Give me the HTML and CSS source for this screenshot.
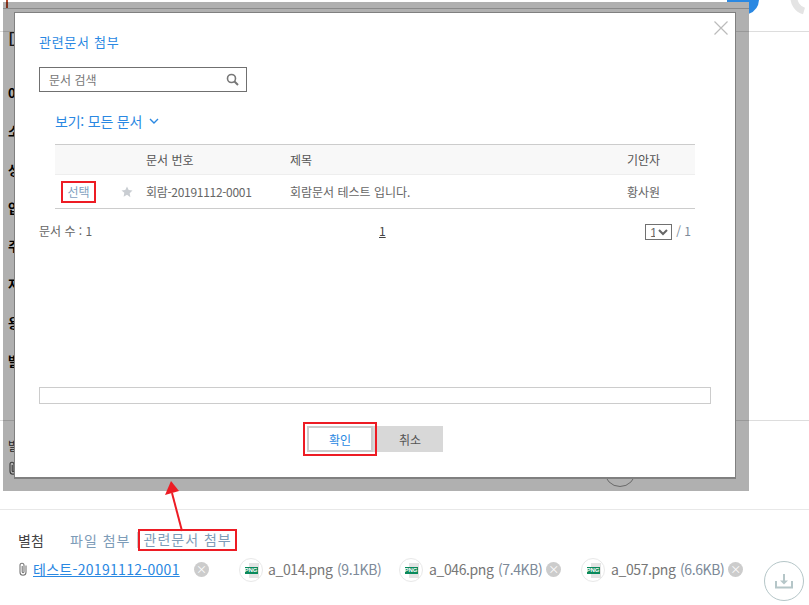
FILE: index.html
```html
<!DOCTYPE html>
<html lang="ko">
<head>
    <meta charset="UTF-8">
    <title>관련문서 첨부</title>
    <link rel="stylesheet" href="styles.css">
</head>
<body>
    <div class="page">
        <div class="main">
            <div class="top-bar">
                <span class="top-mark"></span>
                <svg class="top-icons" width="82" height="32" viewBox="0 0 82 32">
                    <path d="M0 0H22V2H0z" fill="#2a88e2"/>
                    <path d="M22 0H32A16 16 0 0 1 22 13.8z" fill="#2a88e2"/>
                    <path d="M67 -4A14 14 0 0 0 77 11" fill="none" stroke="#e4e4e4" stroke-width="7"/>
                </svg>
            </div>
            <div class="form-title">D</div>
            <div class="form-labels">
                <span>0</span>
                <span>소</span>
                <span>성</span>
                <span>압</span>
                <span>주</span>
                <span>저</span>
                <span>용</span>
                <span>발</span>
            </div>
            <div class="form-foot">
                <span>발</span>
                <svg class="clip" width="10" height="14" viewBox="0 0 10 14">
                    <path d="M8 3.5v6.8a3 3 0 0 1-6 0V3.2a2 2 0 0 1 4 0v6.6a.9.9 0 0 1-1.8 0V4" fill="none" stroke="#555" stroke-width="1.1"/>
                </svg>
                <div class="under-circle"></div>
            </div>
        </div>

        <div class="attach">
            <div class="attach-head">
                <span class="attach-label">별첨</span>
                <a class="attach-tab first">파일 첨부</a>
                <a class="attach-tab marked">관련문서 첨부</a>
            </div>
            <div class="attach-files">
                <svg class="clip" width="10" height="14" viewBox="0 0 10 14">
                    <path d="M8 3.5v6.8a3 3 0 0 1-6 0V3.2a2 2 0 0 1 4 0v6.6a.9.9 0 0 1-1.8 0V4" fill="none" stroke="#777" stroke-width="1.1"/>
                </svg>
                <a class="doc-link">테스트-20191112-0001</a>
                <span class="remove first">×</span>
                <div class="file no-remove">
                    <span class="png-icon"><span class="png-tag">PNG</span></span>
                    <span class="file-name">a_014.png</span>
                    <span class="file-size">(9.1KB)</span>
                </div>
                <div class="file">
                    <span class="png-icon"><span class="png-tag">PNG</span></span>
                    <span class="file-name">a_046.png</span>
                    <span class="file-size">(7.4KB)</span>
                    <span class="remove">×</span>
                </div>
                <div class="file last">
                    <span class="png-icon"><span class="png-tag">PNG</span></span>
                    <span class="file-name">a_057.png</span>
                    <span class="file-size">(6.6KB)</span>
                    <span class="remove">×</span>
                </div>
                <div class="download">
                    <svg width="18" height="16" viewBox="0 0 18 16">
                        <path d="M1 8v6.5h16V8" fill="none" stroke="#b5c6c8" stroke-width="2"/>
                        <path d="M9 1v8" stroke="#b5c6c8" stroke-width="2"/>
                        <path d="M5 7.5h8l-4 4z" fill="#b5c6c8"/>
                    </svg>
                </div>
            </div>
        </div>

        <div class="overlay">
            <div class="modal">
                <svg class="close" width="14" height="14" viewBox="0 0 14 14">
                    <path d="M.5.5l13 13M13.5.5l-13 13" stroke="#bbb" stroke-width="1.2"/>
                </svg>
                <h2 class="modal-title">관련문서 첨부</h2>
                <div class="search-box">
                    <span class="search-text">문서 검색</span>
                    <svg width="13" height="13" viewBox="0 0 13 13">
                        <circle cx="5.5" cy="5.5" r="4" fill="none" stroke="#777" stroke-width="1.6"/>
                        <path d="M8.5 8.5l3.5 3.5" stroke="#777" stroke-width="2"/>
                    </svg>
                </div>
                <div class="view-filter">
                    보기: 모든 문서
                    <svg width="10" height="6" viewBox="0 0 10 6">
                        <path d="M1 1l4 4 4-4" fill="none" stroke="#2a88e2" stroke-width="1.4"/>
                    </svg>
                </div>
                <table class="doc-table">
                    <colgroup>
                        <col class="col-select">
                        <col class="col-star">
                        <col class="col-num">
                        <col class="col-title">
                        <col class="col-author">
                    </colgroup>
                    <thead>
                        <tr>
                            <th></th>
                            <th></th>
                            <th>문서 번호</th>
                            <th>제목</th>
                            <th>기안자</th>
                        </tr>
                    </thead>
                    <tbody>
                        <tr>
                            <td class="select-cell"><a class="select-link">선택</a></td>
                            <td>
                                <svg class="star" width="12" height="12" viewBox="0 0 12 12">
                                    <path d="M6 .5l1.7 3.6 3.8.5-2.8 2.7.7 3.9L6 8.8l-3.4 1.9.7-3.9L.5 4.6l3.8-.5z" fill="#c9cdd2"/>
                                </svg>
                            </td>
                            <td class="doc-num">회람-20191112-0001</td>
                            <td>회람문서 테스트 입니다.</td>
                            <td>황사원</td>
                        </tr>
                    </tbody>
                </table>
                <div class="pager">
                    <span>문서 수 : 1</span>
                    <a class="page-num">1</a>
                    <div class="page-select">
                        <select class="page-dropdown"><option>1</option></select>
                        <span>/ 1</span>
                    </div>
                </div>
                <div class="progress"></div>
                <div class="modal-buttons">
                    <button class="btn btn-ok">확인</button>
                    <button class="btn btn-cancel">취소</button>
                </div>
            </div>
        </div>

        <svg class="arrow" width="24" height="52" viewBox="0 0 24 52">
            <path d="M17 50L7 12" stroke="#ed1c24" stroke-width="2"/>
            <path d="M6 0L14 10 0 14z" fill="#ed1c24"/>
        </svg>
    </div>
</body>
</html>
```

FILE: styles.css
```css
* {
    margin: 0;
    padding: 0;
    box-sizing: border-box;
}

body {
    background: white;
    font-family: "Noto Sans CJK KR", "Open Sans", sans-serif;
    font-size: 12px;
    color: #666;
}

.page {
    position: relative;
    width: 809px;
    height: 605px;
    overflow: hidden;
}

/* page behind the dialog */
.main {
    position: relative;
    height: 510px;
    border-bottom: 1px solid #e8e8e8;
}

.top-bar {
    display: flex;
    height: 32px;
    border-bottom: 1px solid #ddd;
}

.top-mark {
    width: 2px;
    height: 9px;
    margin-left: 6px;
    background: #b5482a;
}

.top-icons {
    margin-left: auto;
}

.form-title {
    padding-left: 8px;
    font-size: 18px;
    line-height: 18px;
    color: #222;
    margin-top: -3px;
}

.form-labels {
    display: flex;
    flex-direction: column;
    gap: 20.3px;
    padding-left: 8px;
    margin-top: 37px;
    font-size: 13px;
    font-weight: bold;
    line-height: 18px;
    color: #000;
}

.form-foot {
    position: relative;
    margin-top: 50px;
    padding: 16px 0 0 8px;
    border-top: 1px solid #ddd;
    display: flex;
    flex-direction: column;
    gap: 6px;
    line-height: 18px;
    color: #333;
}

.under-circle {
    position: absolute;
    left: 604px;
    top: 34px;
    width: 32px;
    height: 32px;
    border: 1px solid #999;
    border-radius: 50%;
}

/* attachments */
.attach {
    padding: 19px 5px 0 18px;
}

.attach-head {
    display: flex;
    align-items: center;
    height: 22px;
    font-size: 14px;
}

.attach-label {
    width: 52px;
    color: #444;
}

.attach-tab {
    color: #7d9cb8;
    letter-spacing: 1px;
    white-space: nowrap;
}

.attach-tab.first {
    width: 67.5px;
    height: 16px;
    line-height: 16px;
    border-right: 1px solid #ccc;
}

.attach-tab.marked {
    width: 99px;
    padding: 0 0 0 4px;
    border: 2px solid #ed1c24;
    height: 22px;
    line-height: 17px;
}

.attach-files {
    display: flex;
    align-items: flex-start;
    margin-top: 5px;
    font-size: 14px;
    line-height: 26px;
}

.attach-files .clip {
    margin: 6px 5px 0 0;
}

.doc-link {
    width: 146px;
    color: #2a88e2;
    letter-spacing: 0.3px;
    text-decoration: underline;
    white-space: nowrap;
}

.remove {
    display: flex;
    align-items: center;
    justify-content: center;
    width: 15px;
    height: 15px;
    margin-top: 6px;
    border-radius: 50%;
    background: #ccc;
    color: white;
    font-size: 11px;
    line-height: 15px;
}

.remove.first {
    margin-left: 15px;
}

.file {
    display: flex;
    align-items: flex-start;
    margin-left: 19px;
    color: #777;
    letter-spacing: -0.4px;
}

.file.no-remove {
    margin-left: 30px;
}

.file.last {
    margin-left: 20px;
}

.file-name {
    width: 69px;
    margin-left: 6px;
}

.file-size {
    width: 48px;
    color: #7d8a99;
}

.file.no-remove .file-name {
    margin-left: 5px;
}

.file.no-remove .file-size {
    width: 43px;
}

.png-icon {
    position: relative;
    display: flex;
    align-items: center;
    justify-content: center;
    width: 24px;
    height: 24px;
    margin-top: 2px;
    border: 1px solid #e8e8e8;
    border-radius: 50%;
    background: linear-gradient(#e4e4e4, #e4e4e4) 9px 4px / 10px 15px no-repeat;
}

.png-tag {
    display: block;
    width: 13px;
    height: 7px;
    background: #0a8a5c;
    color: white;
    font-size: 6px;
    font-family: "Liberation Sans", sans-serif;
    font-weight: bold;
    line-height: 7px;
    text-align: center;
    letter-spacing: 0;
}

.download {
    display: flex;
    align-items: center;
    justify-content: center;
    width: 40px;
    height: 40px;
    margin: 5px 0 0 auto;
    border: 1px solid #b5c6c8;
    border-radius: 50%;
}

/* dialog */
.overlay {
    position: absolute;
    left: 3px;
    top: 2px;
    width: 746px;
    height: 489px;
    padding: 10px 13px 12px 11px;
    background: linear-gradient(#8a8a8a, #8a8a8a) 0 6px / 100% 1px no-repeat, rgba(0, 0, 0, 0.31);
}

.modal {
    position: relative;
    height: 467px;
    padding: 20px 24px 0 24px;
    background: white;
    border: 1px solid #808080;
    border-width: 1px 1px 2px 1px;
}

.close {
    position: absolute;
    right: 7px;
    top: 8px;
}

.modal-title {
    font-size: 13px;
    font-weight: normal;
    line-height: 18px;
    letter-spacing: 0.7px;
    color: #2a88e2;
}

.search-box {
    display: flex;
    align-items: center;
    justify-content: space-between;
    width: 208px;
    height: 25px;
    margin-top: 16px;
    padding: 0 7px 0 9px;
    border: 1px solid #707070;
}

.search-text {
    color: #777;
}

.view-filter {
    display: flex;
    align-items: center;
    gap: 7px;
    height: 18px;
    margin: 20px 0 0 16px;
    font-size: 14px;
    letter-spacing: -0.2px;
    color: #2a88e2;
}

.doc-table {
    width: 640px;
    margin: 14px 0 0 16px;
    border-collapse: collapse;
    table-layout: fixed;
    border-top: 1px solid #ccc;
    border-bottom: 1px solid #ccc;
}

.col-select { width: 61px; }
.col-star { width: 30px; }
.col-num { width: 144px; }
.col-title { width: 337px; }
.col-author { width: 68px; }

.doc-table th {
    height: 30px;
    background: #f8f8f8;
    border-bottom: 1px solid #eee;
    font-weight: normal;
    text-align: left;
    color: #555;
}

.doc-table td {
    height: 34px;
    color: #666;
}

.doc-table .doc-num {
    letter-spacing: -0.3px;
}

.select-cell {
    padding-left: 6px;
}

.select-link {
    display: block;
    width: 35px;
    height: 22px;
    border: 2px solid #ed1c24;
    color: #7f9fc0;
    text-align: center;
    line-height: 17px;
}

.star {
    display: block;
    margin-left: 5px;
}

.pager {
    display: grid;
    grid-template-columns: 340px 1fr auto;
    align-items: start;
    height: 16px;
    margin-top: 15px;
    padding-right: 20px;
    line-height: 14px;
}

.page-num {
    color: #444;
    text-decoration: underline;
}

.page-select {
    display: flex;
    align-items: flex-start;
    gap: 4px;
    color: #7d8a99;
}

.page-dropdown {
    width: 27px;
    height: 16px;
    border: 1px solid #707070;
    background: white;
    font-family: "Liberation Sans", sans-serif;
    font-size: 12px;
    color: #666;
}

.progress {
    height: 17px;
    margin-top: 147px;
    border: 1px solid #ccc;
}

.modal-buttons {
    display: flex;
    justify-content: center;
    margin-top: 22px;
}

.btn {
    height: 26px;
    font-family: inherit;
    font-size: 12px;
    border: none;
}

.btn-ok {
    position: relative;
    z-index: 1;
    width: 66px;
    background: white;
    border: 2px solid #ccc;
    color: #2a88e2;
    outline: 2px solid #ed1c24;
    outline-offset: 2px;
}

.btn-cancel {
    width: 70px;
    padding-left: 4px;
    background: #d8d8d8;
    color: #555;
}

.arrow {
    position: absolute;
    left: 165px;
    top: 481px;
}
```
